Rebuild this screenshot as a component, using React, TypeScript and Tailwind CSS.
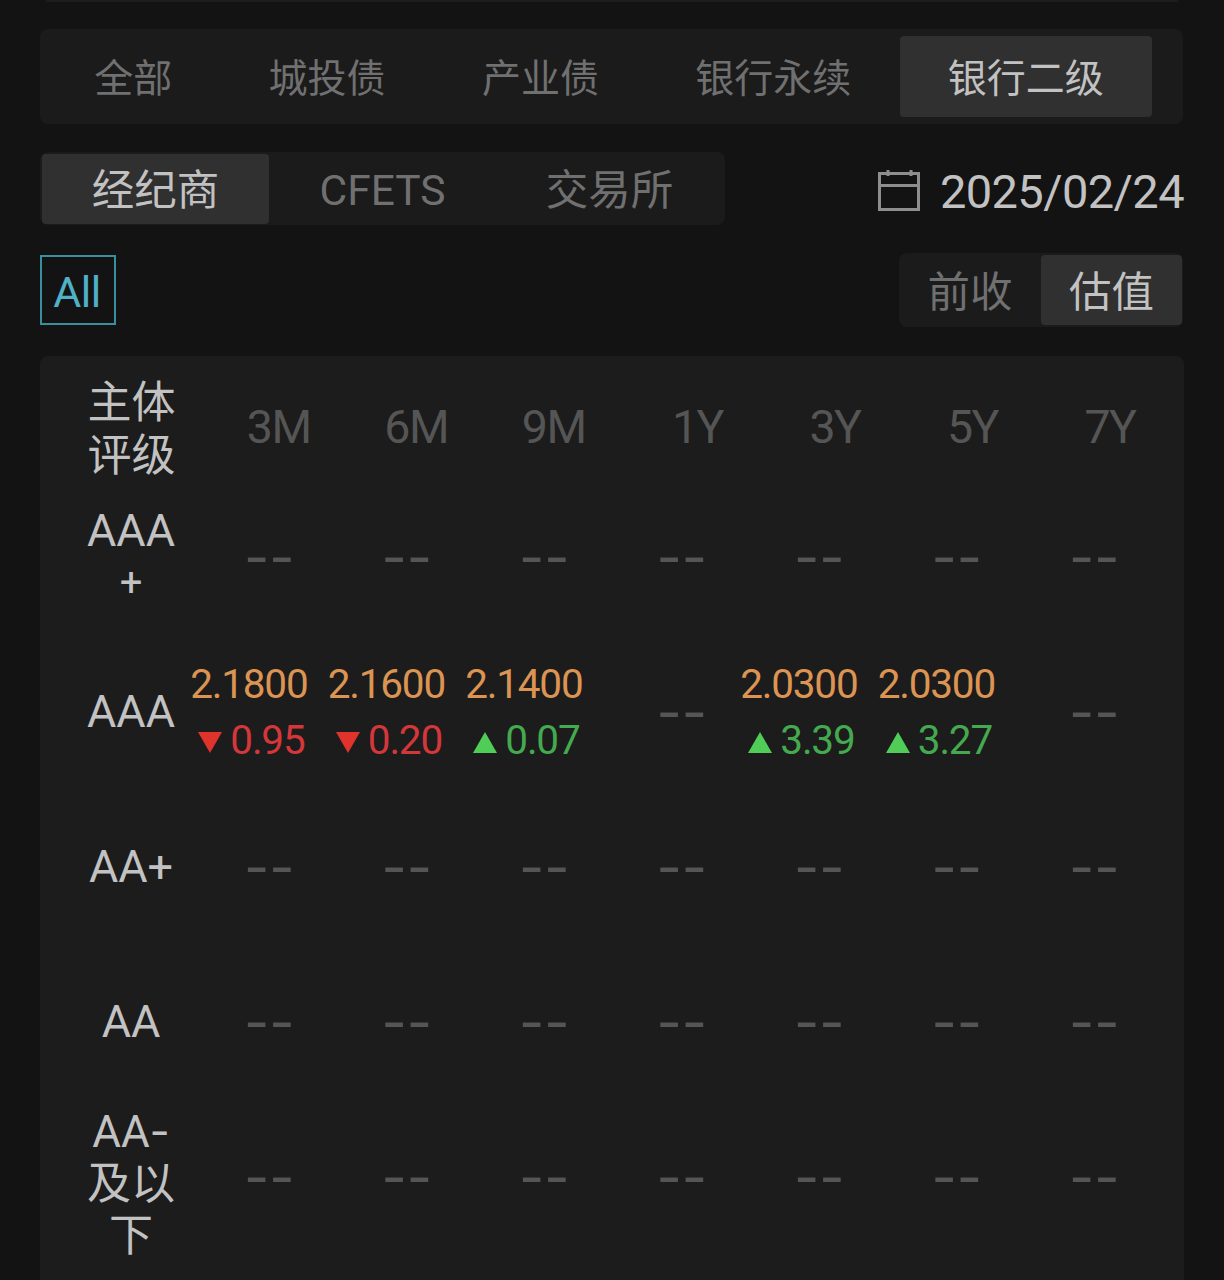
import React from 'react';

type Quote = { price: string; change: string; up: boolean } | null;
type Row = { label: string[]; quotes: Quote[] };

const EMPTY: Quote[] = [null, null, null, null, null, null, null];

const CATEGORIES = ['全部', '城投债', '产业债', '银行永续', '银行二级'];
const SOURCES = ['经纪商', 'CFETS', '交易所'];
const TERMS = ['3M', '6M', '9M', '1Y', '3Y', '5Y', '7Y'];

const ROWS: Row[] = [
  { label: ['AAA', '+'], quotes: EMPTY },
  {
    label: ['AAA'],
    quotes: [
      { price: '2.1800', change: '0.95', up: false },
      { price: '2.1600', change: '0.20', up: false },
      { price: '2.1400', change: '0.07', up: true },
      null,
      { price: '2.0300', change: '3.39', up: true },
      { price: '2.0300', change: '3.27', up: true },
      null,
    ],
  },
  { label: ['AA+'], quotes: EMPTY },
  { label: ['AA'], quotes: EMPTY },
  { label: ['AA-', '及以', '下'], quotes: EMPTY },
];

function CalendarIcon() {
  return (
    <svg width="44" height="44" viewBox="0 0 44 44" fill="none" stroke="#8e8e8e" strokeWidth="3" className="mt-[2px]">
      <path d="M2.5 5.5H41.5V41.5H2.5Z" />
      <path d="M2.5 17.5H41.5" />
      <path d="M11 2V8M34 2V8" />
    </svg>
  );
}

function Triangle({ up }: { up: boolean }) {
  return (
    <svg width="24" height="21" viewBox="0 0 24 21" className="mt-[5px]">
      {up ? <path d="M12 0L24 21H0Z" fill="#4fcd56" /> : <path d="M0 0H24L12 21Z" fill="#e0332c" />}
    </svg>
  );
}

function QuoteCell({ quote }: { quote: Quote }) {
  if (!quote) {
    return (
      <div className="flex h-[155px] items-center justify-end pr-[21px] pb-[5px] font-['Inter'] text-[55px] leading-[60px] text-[#555555]">
        --
      </div>
    );
  }
  return (
    <div className="flex h-[155px] flex-col items-end justify-center pb-[5px]">
      <div className="pr-[8px] text-[40.5px] leading-[56px] tracking-[-1.2px] text-[#dc9453]">{quote.price}</div>
      <div className="flex items-center gap-[8px] pr-[11px] text-[40.5px] leading-[56px] tracking-[-1.2px]">
        <Triangle up={quote.up} />
        <span className={quote.up ? 'text-[#44a94f]' : 'text-[#d3373a]'}>{quote.change}</span>
      </div>
    </div>
  );
}

function LabelLine({ text }: { text: string }) {
  if (text === '+') {
    return <div className="text-[40px]">+</div>;
  }
  if (text === 'AA-') {
    return (
      <div>
        AA<span className="font-['Inter']">-</span>
      </div>
    );
  }
  return <div>{text}</div>;
}

export default function App() {
  return (
    <div className="h-[1280px] w-[1224px] overflow-hidden bg-[#131313] px-10 font-['Roboto','Noto_Sans_CJK_SC',sans-serif] text-[#c2c2c2]">
      <div className="mx-[6px] h-[2px] bg-[#1d1d1d]" />

      <nav className="mt-[27px] flex h-[95px] w-[1143px] items-center rounded-lg bg-[#1b1b1b] pl-[6px]">
        {CATEGORIES.map((name, i) => (
          <div
            key={name}
            className={
              i === 4
                ? 'flex h-[81px] items-center rounded bg-[#303030] px-[48.2px] pt-[5px] text-[39px] leading-[56px] text-[#c2c2c2]'
                : 'flex h-[81px] items-center px-[48.2px] pt-[5px] text-[39px] leading-[56px] text-[#707070]'
            }
          >
            {name}
          </div>
        ))}
      </nav>

      <div className="mt-7 flex h-[73px] items-center justify-between">
        <div className="flex h-[73px] w-[685px] items-center rounded-lg bg-[#1b1b1b] pl-[2px]">
          {SOURCES.map((name, i) => (
            <div
              key={name}
              className={
                i === 0
                  ? 'flex h-[70px] w-[227px] items-center justify-center rounded bg-[#303030] pt-1 text-[42.5px] text-[#c2c2c2]'
                  : 'flex h-[70px] w-[227px] items-center justify-center pt-1 text-[42.5px] text-[#707070]'
              }
            >
              {name}
            </div>
          ))}
        </div>
        <div className="flex items-center gap-[19px]">
          <CalendarIcon />
          <span className="pt-[6px] text-[47px] leading-[60px] tracking-[-0.6px]">2025/02/24</span>
        </div>
      </div>

      <div className="mt-7 flex h-[74px] items-center justify-between">
        <div className="flex h-[70px] w-[76px] items-center justify-center border-2 border-[#3a8f9c] pt-1 pr-[2px] text-[43px] tracking-[-0.5px] text-[#4fb0c6]">
          All
        </div>
        <div className="mr-px flex h-[74px] w-[284px] items-center justify-end rounded-lg bg-[#1b1b1b] pr-px text-[42.5px]">
          <div className="flex h-[70px] w-[142px] items-center justify-center pt-[5px] text-[#707070]">前收</div>
          <div className="flex h-[70px] w-[141px] items-center justify-center rounded bg-[#303030] pt-[5px]">估值</div>
        </div>
      </div>

      <section className="mt-[29px] h-[940px] rounded-t-lg bg-[#1c1c1c] pl-[45px]">
        <div className="flex h-[126px] pt-[18px]">
          <div className="w-[93px] pt-[3px] text-center text-[44px] leading-[53px]">
            主体
            <br />
            评级
          </div>
          {TERMS.map((term) => (
            <div
              key={term}
              className="w-[137.5px] pr-[5px] text-right text-[46.5px] leading-[106px] tracking-[-1.5px] text-[#555555]"
            >
              {term}
            </div>
          ))}
        </div>
        {ROWS.map((row) => (
          <div key={row.label.join('')} className="flex h-[155px] items-center">
            <div
              className={
                row.label.length === 3
                  ? 'w-[93px] pt-[7px] pr-px text-center text-[44px] leading-[52px]'
                  : 'w-[93px] pr-px pb-[6px] text-center text-[45px] leading-[52px]'
              }
            >
              {row.label.map((line) => (
                <LabelLine key={line} text={line} />
              ))}
            </div>
            {row.quotes.map((quote, i) => (
              <div key={TERMS[i]} className="w-[137.5px]">
                <QuoteCell quote={quote} />
              </div>
            ))}
          </div>
        ))}
      </section>
    </div>
  );
}
